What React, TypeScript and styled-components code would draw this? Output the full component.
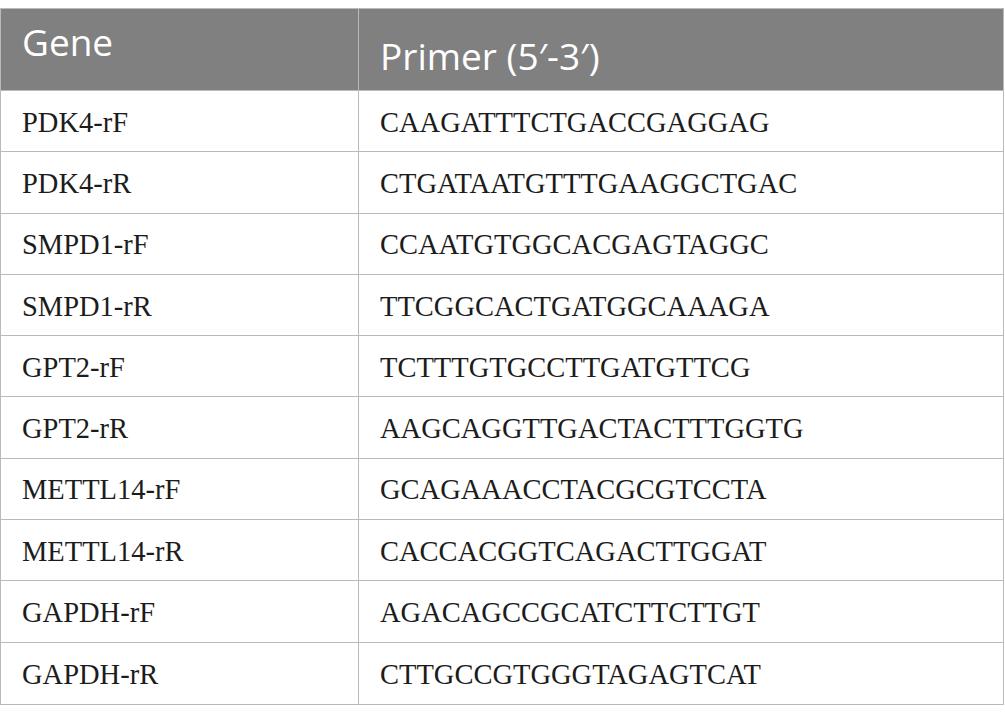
import React from "react";
import styled, { createGlobalStyle } from "styled-components";

const GlobalStyle = createGlobalStyle`
  html, body { margin: 0; padding: 0; background: #ffffff; }
  *, *::before, *::after { box-sizing: border-box; }
`;

const LINE = "#bababa";

const Page = styled.div`
  padding-top: 8px;
  width: 1005px;
`;

const Table = styled.div`
  width: 1004px;
  border: 1px solid ${LINE};
  display: grid;
  grid-template-columns: 358px 1fr;
  grid-template-rows: 82px;
  grid-auto-rows: 61.3px;
`;

const HeadCell = styled.div<{ $offset: number; $first?: boolean }>`
  background: #7f807f;
  color: #ffffff;
  font-family: "Open Sans", "Noto Sans", sans-serif;
  font-size: 37px;
  font-weight: 400;
  line-height: 37px;
  padding: ${(p) => p.$offset}px 0 0 ${(p) => (p.$first ? 21 : 21)}px;
  border-bottom: 1px solid ${LINE};
  border-right: ${(p) => (p.$first ? `1px solid ${LINE}` : "none")};
  white-space: nowrap;
`;

const Cell = styled.div<{ $first?: boolean; $last?: boolean }>`
  display: flex;
  align-items: center;
  padding: 3px 0 0 ${(p) => (p.$first ? 21 : 21)}px;
  font-family: "Liberation Serif", "Times New Roman", serif;
  font-size: 28.5px;
  color: #1c1c1c;
  border-bottom: ${(p) => (p.$last ? "none" : `1px solid ${LINE}`)};
  border-right: ${(p) => (p.$first ? `1px solid ${LINE}` : "none")};
  white-space: nowrap;
`;

const rows: [string, string][] = [
  ["PDK4-rF", "CAAGATTTCTGACCGAGGAG"],
  ["PDK4-rR", "CTGATAATGTTTGAAGGCTGAC"],
  ["SMPD1-rF", "CCAATGTGGCACGAGTAGGC"],
  ["SMPD1-rR", "TTCGGCACTGATGGCAAAGA"],
  ["GPT2-rF", "TCTTTGTGCCTTGATGTTCG"],
  ["GPT2-rR", "AAGCAGGTTGACTACTTTGGTG"],
  ["METTL14-rF", "GCAGAAACCTACGCGTCCTA"],
  ["METTL14-rR", "CACCACGGTCAGACTTGGAT"],
  ["GAPDH-rF", "AGACAGCCGCATCTTCTTGT"],
  ["GAPDH-rR", "CTTGCCGTGGGTAGAGTCAT"],
];

export default function App() {
  return (
    <>
      <GlobalStyle />
      <Page>
        <Table>
          <HeadCell $first $offset={14}>Gene</HeadCell>
          <HeadCell $offset={28}>Primer (5′-3′)</HeadCell>
          {rows.map(([gene, primer], i) => (
            <React.Fragment key={gene}>
              <Cell $first $last={i === rows.length - 1}>{gene}</Cell>
              <Cell $last={i === rows.length - 1}>{primer}</Cell>
            </React.Fragment>
          ))}
        </Table>
      </Page>
    </>
  );
}
